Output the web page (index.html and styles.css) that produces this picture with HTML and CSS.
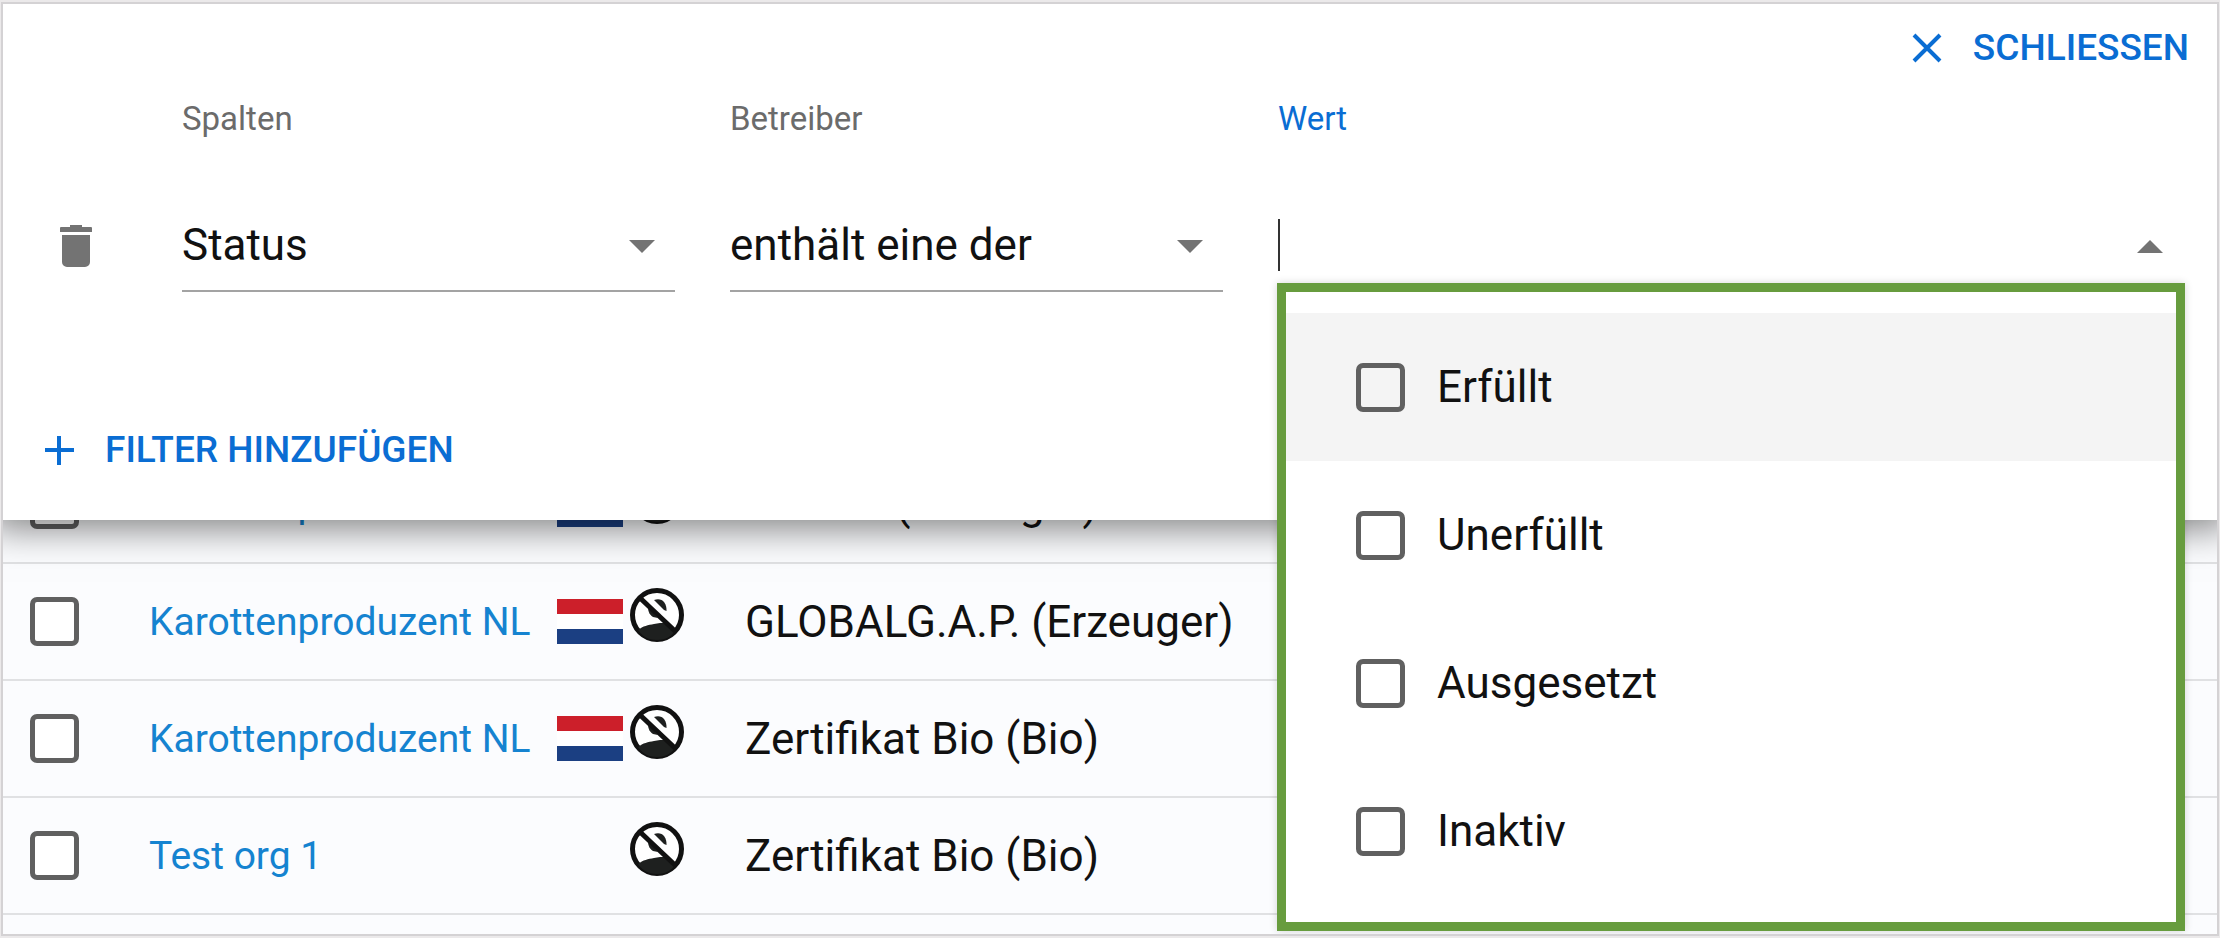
FILE: index.html
```html
<!DOCTYPE html>
<html lang="de">
<head>
<meta charset="utf-8">
<title>Filter</title>
<meta name="viewport" content="width=device-width, initial-scale=1">
<link rel="stylesheet" href="styles.css">
</head>
<body>
<svg class="sprite" aria-hidden="true">
  <symbol id="person-off" viewBox="0 0 54 54">
    <circle cx="27" cy="27" r="24.500" fill="#fff" stroke="#111" stroke-width="5"/>
    <path d="M24 12c7-3 13 2 12.500 11L34 22z" fill="#1e201f"/>
    <path d="M18 19c0 5 2 8 5 10l5 1z" fill="#1e201f"/>
    <path d="M8 42c5-4 10-5 16-6l6-1 4 0 12 7c-5 7-11 10-19 10S13 49 8 42z" fill="#1e201f"/>
    <path d="M9 9l37 35" stroke="#111" stroke-width="5"/>
  </symbol>
  <symbol id="flag-nl" viewBox="0 0 66 45">
    <path d="M0 0h66v45H0z" fill="#fff"/>
    <path d="M0 0h66v15H0z" fill="#cc1f2a"/>
    <path d="M0 30h66v15H0z" fill="#1b3f82"/>
  </symbol>
</svg>
<main class="frame">
  <form class="panel">
    <div class="panel-top">
      <button type="button" class="text-button">
        <svg class="button-icon" viewBox="0 0 32 32"><path d="M3 4l26 26M29 4L3 30"/></svg>
        SCHLIESSEN
      </button>
    </div>
    <div class="filter-row">
      <button type="button" class="delete" aria-label="Filter löschen">
        <svg viewBox="0 0 32 42"><path d="M10 0h12v2h9a1 1 0 0 1 1 1v4H0V3a1 1 0 0 1 1-1h9zM2 10h28v27a5 5 0 0 1-5 5H7a5 5 0 0 1-5-5z"/></svg>
      </button>
      <div class="field">
        <label for="column">Spalten</label>
        <div class="control">
          <select id="column"><option>Status</option></select>
          <svg class="arrow" viewBox="0 0 26 13"><path d="M0 0h26L13 13z"/></svg>
        </div>
      </div>
      <div class="field">
        <label for="operator">Betreiber</label>
        <div class="control">
          <select id="operator"><option>enthält eine der</option></select>
          <svg class="arrow" viewBox="0 0 26 13"><path d="M0 0h26L13 13z"/></svg>
        </div>
      </div>
      <div class="field field-active">
        <label for="value">Wert</label>
        <div class="control">
          <input id="value" class="value-input" type="text" autocomplete="off">
          <svg class="arrow" viewBox="0 0 26 13"><path d="M0 13h26L13 0z"/></svg>
        </div>
        <div class="menu">
          <label class="menu-item menu-item-focused"><input type="checkbox" class="check">Erfüllt</label>
          <label class="menu-item"><input type="checkbox" class="check">Unerfüllt</label>
          <label class="menu-item"><input type="checkbox" class="check">Ausgesetzt</label>
          <label class="menu-item"><input type="checkbox" class="check">Inaktiv</label>
        </div>
      </div>
    </div>
    <button type="button" class="text-button add-button">
      <svg class="button-icon" viewBox="0 0 32 32"><path d="M16 3v29M2 17h29"/></svg>
      FILTER HINZUFÜGEN
    </button>
  </form>
  <table class="results">
    <tbody>
      <tr>
        <td class="cell-check"><input type="checkbox" class="check" aria-label="Zeile auswählen"></td>
        <td class="cell-name"><a href="#">Karottenproduzent NL</a></td>
        <td class="cell-icons"><div class="icons"><svg class="flag"><use href="#flag-nl"/></svg><svg class="person"><use href="#person-off"/></svg></div></td>
        <td>GRASP (Erzeuger)</td>
      </tr>
      <tr>
        <td class="cell-check"><input type="checkbox" class="check" aria-label="Zeile auswählen"></td>
        <td class="cell-name"><a href="#">Karottenproduzent NL</a></td>
        <td class="cell-icons"><div class="icons"><svg class="flag"><use href="#flag-nl"/></svg><svg class="person"><use href="#person-off"/></svg></div></td>
        <td>GLOBALG.A.P. (Erzeuger)</td>
      </tr>
      <tr>
        <td class="cell-check"><input type="checkbox" class="check" aria-label="Zeile auswählen"></td>
        <td class="cell-name"><a href="#">Karottenproduzent NL</a></td>
        <td class="cell-icons"><div class="icons"><svg class="flag"><use href="#flag-nl"/></svg><svg class="person"><use href="#person-off"/></svg></div></td>
        <td>Zertifikat Bio (Bio)</td>
      </tr>
      <tr>
        <td class="cell-check"><input type="checkbox" class="check" aria-label="Zeile auswählen"></td>
        <td class="cell-name"><a href="#">Test org 1</a></td>
        <td class="cell-icons"><div class="icons"><svg class="person"><use href="#person-off"/></svg></div></td>
        <td>Zertifikat Bio (Bio)</td>
      </tr>
    </tbody>
  </table>
</main>
</body>
</html>
```
FILE: styles.css
```css
* {
  box-sizing: border-box;
}

body {
  margin: 0;
  background: #ebe9ea;
  color: #111;
  font-family: Roboto, "Liberation Sans", sans-serif;
  font-size: 44px;
}

button,
input,
select {
  font: inherit;
  color: inherit;
  margin: 0;
  padding: 0;
  border: 0;
  background: none;
}

.sprite {
  position: absolute;
  width: 0;
  height: 0;
}

.frame {
  height: calc(100vh - 4px);
  margin: 2px 1px;
  border: 2px solid #d4d2d4;
  background: #fbfcfe;
  overflow: hidden;
}

.panel {
  position: relative;
  z-index: 1;
  background: #fff;
  padding-bottom: 43px;
  box-shadow: 0 -4px 36px 12px rgba(0, 0, 0, 0.5);
}

.panel-top {
  display: flex;
  justify-content: flex-end;
  padding: 15px 28px 0 0;
}

.text-button {
  display: flex;
  align-items: center;
  gap: 30px;
  height: 56px;
  color: #0a6dd3;
  font-size: 37px;
  font-weight: 500;
}

.button-icon {
  width: 32px;
  height: 32px;
  fill: none;
  stroke: currentColor;
  stroke-width: 4;
}

.filter-row {
  display: grid;
  grid-template-columns: 124px 493fr 493fr 907fr;
  column-gap: 55px;
  padding: 24px 32px 0 0;
}

.delete {
  align-self: end;
  height: 92px;
  padding-left: 22px;
}

.delete svg {
  display: block;
  width: 32px;
  height: 42px;
  margin: 0 auto;
  fill: #737373;
}

.field {
  position: relative;
  display: flex;
  flex-direction: column;
  gap: 60px;
}

.field > label {
  color: #6b6b6b;
  font-size: 33px;
  line-height: 40px;
}

.field-active > label {
  color: #0a6dd3;
}

.control {
  display: flex;
  align-items: center;
  height: 93px;
  border-bottom: 2px solid #a3a3a3;
}

.control select,
.value-input {
  flex: 1;
  min-width: 0;
  height: 52px;
  appearance: none;
  outline: none;
}

.value-input {
  border-left: 2px solid #333;
}

.arrow {
  width: 26px;
  height: 13px;
  margin: 3px 20px 0 0;
  fill: #737373;
}

.field-active .arrow {
  margin-right: 22px;
}

.menu {
  position: absolute;
  top: 184px;
  left: -1px;
  right: 0;
  padding: 21px 0 17px;
  border: 9px solid #679c3e;
  background: #fff;
  box-shadow: 0 0 8px rgba(0, 0, 0, 0.16);
}

.menu-item {
  display: flex;
  align-items: center;
  gap: 32px;
  height: 148px;
  padding-left: 70px;
}

.menu-item-focused {
  background: #f4f4f4;
}

.check {
  display: block;
  flex: none;
  width: 49px;
  height: 49px;
  appearance: none;
  border: 5px solid #606060;
  border-radius: 7px;
  background: #fff;
}

.menu-item-focused .check {
  background: transparent;
}

.add-button {
  margin: 129px 0 0 40px;
}

.results {
  width: 100%;
  margin-top: -74px;
  border-collapse: collapse;
}

.results td {
  height: 117px;
  padding: 0;
  border-bottom: 2px solid #e0e1e3;
}

.results .cell-check {
  width: 146px;
  padding-left: 27px;
}

.results .cell-name {
  width: 408px;
  font-size: 39px;
}

.cell-name a {
  color: #1583d0;
  text-decoration: none;
}

.results .cell-icons {
  width: 188px;
}

.icons {
  display: flex;
  justify-content: flex-end;
  align-items: center;
  gap: 7px;
  width: 127px;
}

.flag {
  width: 66px;
  height: 45px;
}

.person {
  width: 54px;
  height: 54px;
  margin-bottom: 14px;
}
```
